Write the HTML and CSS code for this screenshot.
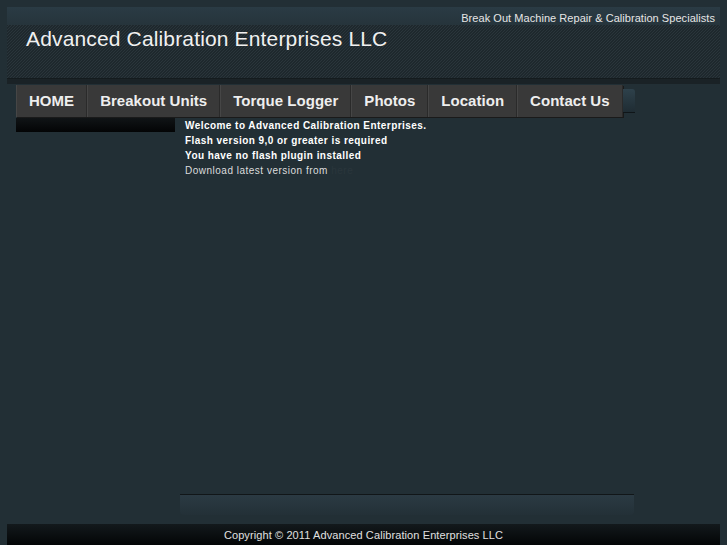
FILE: index.html
```html
<!DOCTYPE html>
<html lang="en">
<head>
    <meta charset="UTF-8">
    <title>Advanced Calibration Enterprises LLC</title>
    <link rel="stylesheet" href="styles.css">
</head>
<body>
    <div class="wrapper">
        <div class="header">
            <div class="header-top">Break Out Machine Repair &amp; Calibration Specialists</div>
            <div class="header-main">
                <h1>Advanced Calibration Enterprises LLC</h1>
            </div>
            <div class="header-bottom"></div>
        </div>
        <div class="nav-row">
            <ul class="nav">
                <li><a href="#">HOME</a></li>
                <li><a href="#">Breakout Units</a></li>
                <li><a href="#">Torque Logger</a></li>
                <li><a href="#">Photos</a></li>
                <li><a href="#">Location</a></li>
                <li><a href="#">Contact Us</a></li>
            </ul>
            <div class="nav-end"></div>
        </div>
        <div class="body-row">
            <div class="sidebar">
                <div class="side-bar"></div>
            </div>
            <div class="main">
                <div class="content">
                    <p class="strong">Welcome to Advanced Calibration Enterprises.</p>
                    <p class="strong">Flash version 9,0 or greater is required</p>
                    <p class="strong">You have no flash plugin installed</p>
                    <p>Download latest version from <a href="#">here</a></p>
                </div>
                <div class="main-bottom"></div>
            </div>
        </div>
        <div class="footer">Copyright &copy; 2011 Advanced Calibration Enterprises LLC</div>
    </div>
</body>
</html>
```

FILE: styles.css
```css
body {
    margin: 0;
    padding: 7px 7px 0 7px;
    background-color: #222f35;
    font-family: "Liberation Sans", Arial, sans-serif;
    color: #eeeeee;
}
.wrapper {
    width: 713px;
}
.header {
    height: 77px;
    display: flex;
    flex-direction: column;
}
.header-top {
    height: 18px;
    background: linear-gradient(#2a3b44, #26343b);
    font-size: 11px;
    line-height: 22px;
    letter-spacing: 0.05px;
    text-align: right;
    padding-right: 5px;
    color: #e6e6e6;
}
.header-main {
    flex: 1;
    background: repeating-linear-gradient(135deg, #1e282d 0, #1e282d 0.9px, #2a353b 1.1px, #2a353b 2.121px);
}
.header-main h1 {
    margin: 0;
    padding: 2px 0 0 19px;
    font-size: 21px;
    letter-spacing: 0.15px;
    font-weight: normal;
    color: #f0f0f0;
}
.header-bottom {
    height: 5px;
    background: #1a2226;
    border-top: 1px solid #141b1e;
}
.nav-row {
    display: flex;
    align-items: flex-start;
    margin-left: 9px;
    margin-top: 1px;
}
.nav {
    display: flex;
    margin: 0;
    padding: 0;
    list-style: none;
    background: #393939;
    box-shadow: 1px 1px 0 #1a1a1a;
}
.nav li a {
    display: block;
    height: 32px;
    line-height: 32px;
    padding: 0 12px;
    font-size: 15px;
    letter-spacing: 0.03px;
    font-weight: bold;
    color: #eeeeee;
    text-decoration: none;
    border-left: 1px solid #464646;
    border-right: 1px solid #2a2a2a;
}
.nav-end {
    width: 12px;
    height: 23px;
    margin-top: 4px;
    background: linear-gradient(#2e414b, #1f2c33);
    border-bottom: 1px solid #0f1518;
    border-top-right-radius: 3px;
}
.body-row {
    display: flex;
}
.sidebar {
    width: 164px;
    padding-left: 9px;
}
.side-bar {
    width: 159px;
    height: 14px;
    margin-top: 1px;
    background: linear-gradient(#101416, #030405);
}
.main {
    width: 454px;
    display: flex;
    flex-direction: column;
}
.content {
    height: 376px;
    padding: 1px 0 0 5px;
}
.content p {
    margin: 0;
    font-size: 10px;
    line-height: 15px;
    letter-spacing: 0.5px;
    color: #dddddd;
}
.content p.strong {
    font-weight: bold;
    letter-spacing: 0.45px;
    color: #ffffff;
}
.content a {
    color: #2a363c;
    text-decoration: none;
}
.main-bottom {
    height: 20px;
    border-top: 1px solid #111618;
    background: linear-gradient(#2b3a43, #233037);
    border-radius: 0 0 4px 4px;
}
.footer {
    margin-top: 9px;
    height: 21px;
    line-height: 23px;
    background: linear-gradient(#13191c, #030506);
    text-align: center;
    font-size: 11px;
    letter-spacing: 0.1px;
    color: #e0e0e0;
}
```
